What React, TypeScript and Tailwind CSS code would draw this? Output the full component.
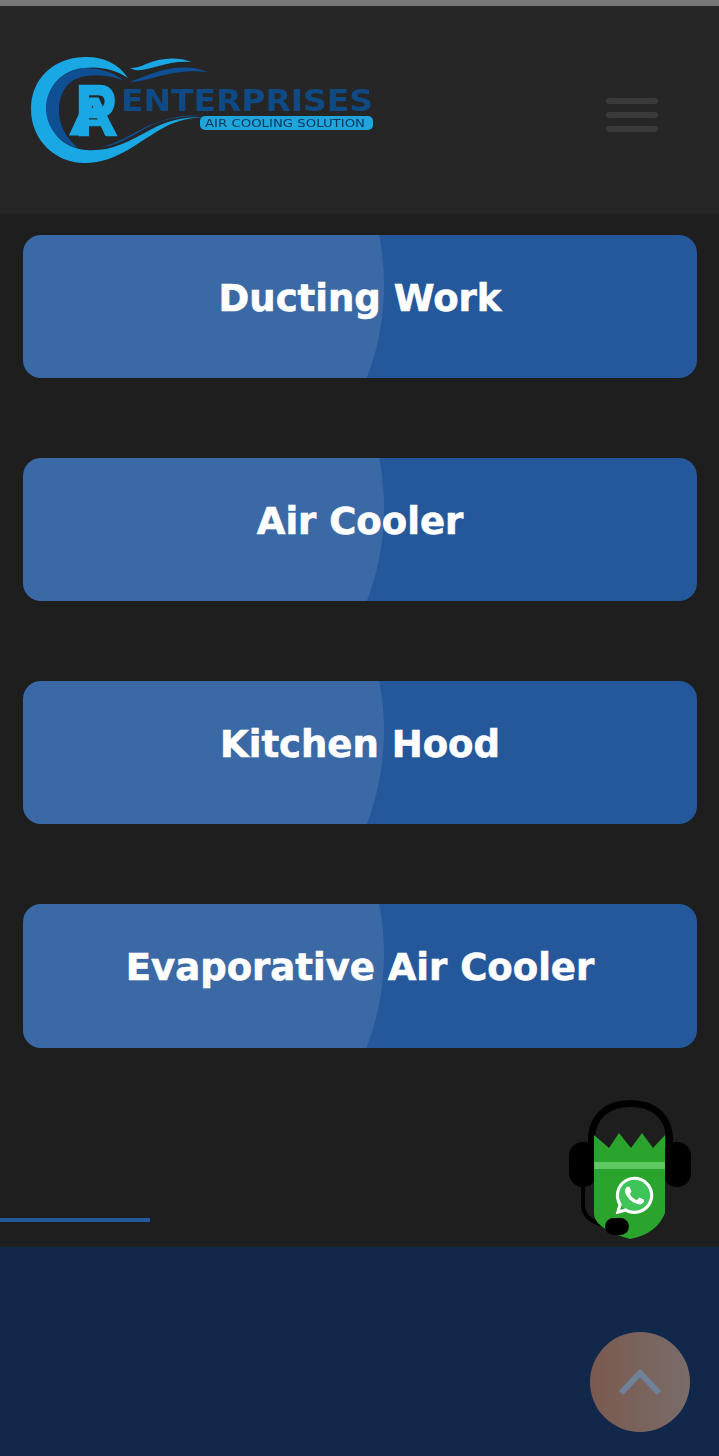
import { FaWhatsapp } from "react-icons/fa";

const items: { label: string; h: string }[] = [
  { label: "Ducting Work", h: "h-[143px]" },
  { label: "Air Cooler", h: "h-[143px]" },
  { label: "Kitchen Hood", h: "h-[143px]" },
  { label: "Evaporative Air Cooler", h: "h-[144px]" },
];

function Logo() {
  return (
    <svg viewBox="30 55 345 110" className="w-[345px] h-[110px] block">
      <g style={{ filter: "blur(0.7px)" }}>
        <path
          d="M128 78 C118 62 100 56 84 57 C52 58 31 80 31 109 C31 140 55 163 85 163 C118 163 140 140 165 127 C178 120 190 118 204 117 C184 117 168 120 150 130 C128 142 110 152 86 150 C62 148 47 130 47 108 C47 86 62 70 84 68 C100 66 116 70 128 78 Z"
          fill="#19a8e4"
        />
        <path
          d="M124 81 C112 71 98 68 84 68 C62 70 46 88 46 108 C46 128 60 143 78 148 C66 138 58 124 59 108 C60 90 70 78 86 76 C100 74 113 76 124 81 Z"
          fill="#0f4f94"
        />
        <path
          d="M100 147 C124 146 140 128 162 121 C176 117 190 116 204 116 C186 114 170 117 152 124 C134 132 118 144 100 147 Z"
          fill="#0f4f94"
        />
        <path
          d="M130 68 C144 76 160 60 192 62 C176 56 160 58 146 64 C140 67 134 68 130 68 Z"
          fill="#19a8e4"
        />
        <path
          d="M130 82 C150 82 170 68 208 72 C188 64 166 68 148 75 C140 78 134 80 130 82 Z"
          fill="#0f4f94"
        />
        <text
          x="76"
          y="135"
          fontFamily="Liberation Sans, sans-serif"
          fontWeight="700"
          fontSize="70"
          fill="#19a8e4"
          stroke="#19a8e4"
          strokeWidth="2.5"
          textLength="41"
          lengthAdjust="spacingAndGlyphs"
        >
          R
        </text>
        <text
          x="68"
          y="135"
          fontFamily="Liberation Sans, sans-serif"
          fontWeight="700"
          fontSize="53"
          fill="#19a8e4"
          stroke="#19a8e4"
          strokeWidth="0.8"
          textLength="49"
          lengthAdjust="spacingAndGlyphs"
        >
          A
        </text>
        <text
          x="121"
          y="111"
          fontFamily="DejaVu Sans, sans-serif"
          fontWeight="700"
          fontSize="30"
          fill="#0f4a85"
          textLength="252"
          lengthAdjust="spacingAndGlyphs"
        >
          ENTERPRISES
        </text>
        <rect x="200" y="116" width="173" height="14" rx="5" fill="#1fa5dc" />
        <text
          x="205"
          y="127"
          fontFamily="DejaVu Sans, sans-serif"
          fontWeight="400"
          fontSize="10.5"
          fill="#0b3557"
          textLength="160"
          lengthAdjust="spacingAndGlyphs"
        >
          AIR COOLING SOLUTION
        </text>
      </g>
    </svg>
  );
}

function Card({ label, h }: { label: string; h: string }) {
  return (
    <div className={`relative overflow-hidden rounded-[18px] bg-[#24589b] flex justify-center pt-[39px] ${h}`}>
      <div className="absolute left-[-159px] top-[-210px] w-[520px] h-[520px] rounded-full bg-white/10" />
      <span className="relative font-['DejaVu_Sans',sans-serif] font-bold text-[37px] leading-[50px] text-white [-webkit-text-stroke:0.6px_white]">
        {label}
      </span>
    </div>
  );
}

function Agent() {
  return (
    <div className="absolute left-[540px] top-[1080px] w-[179px] h-[180px]">
      <svg viewBox="0 0 179 180" className="w-[179px] h-[180px] block">
        <path d="M51.5 72 V60 C51.5 36 68 23.5 90.5 23.5 C113 23.5 129.5 36 129.5 60 V72" fill="none" stroke="#000" strokeWidth="7" />
        <rect x="29" y="62" width="28" height="45" rx="14" fill="#000" />
        <rect x="123" y="62" width="28" height="45" rx="14" fill="#000" />
        <path d="M43 104 V125 C43 136 52 143 68 146" fill="none" stroke="#000" strokeWidth="4" />
        <path
          d="M54 55 L69 68 L79 53 L91 68 L102 53 L113 68 L125 55 V133 C120 146 108 156 90 159 C72 154 54 146 54 133 Z"
          fill="#2aa42c"
        />
        <rect x="54" y="82" width="71" height="7" fill="#5fc862" />
        <circle cx="95" cy="116" r="17" fill="#3fc45a" />
        <rect x="65" y="138" width="24" height="17" rx="8.5" fill="#000" />
      </svg>
      <FaWhatsapp className="absolute left-[73px] top-[94px] text-white" size={43} />
    </div>
  );
}

export default function App() {
  return (
    <div className="relative w-[719px] h-[1456px] overflow-hidden bg-[#1e1e1e]">
      <div className="h-[6px] bg-[#777777]" />
      <header className="h-[208px] bg-[#262626] flex items-center justify-between pl-[30px] pr-[61px]">
        <Logo />
        <div className="flex flex-col gap-[8px] w-[52px] mt-[10px]">
          <div className="h-[6px] rounded-full bg-[#3a3a3a]" />
          <div className="h-[6px] rounded-full bg-[#3a3a3a]" />
          <div className="h-[6px] rounded-full bg-[#3a3a3a]" />
        </div>
      </header>
      <main className="pt-[21px] pl-[23px] pr-[22px] flex flex-col gap-[80px]">
        {items.map((it) => (
          <Card key={it.label} label={it.label} h={it.h} />
        ))}
      </main>
      <div className="mt-[170px] w-[150px] h-[4px] bg-[#24589b]" />
      <footer className="mt-[25px] h-[209px] bg-[#12284a]" />
      <Agent />
      <button className="absolute left-[590px] top-[1332px] w-[100px] h-[100px] rounded-full bg-gradient-to-r from-[#7a5a4f] to-[#796c69] flex items-center justify-center">
        <svg viewBox="0 0 50 30" className="w-[50px] h-[30px] block">
          <path d="M6 26 L25 6 L44 26" fill="none" stroke="#6f8299" strokeWidth="6" />
        </svg>
      </button>
    </div>
  );
}
